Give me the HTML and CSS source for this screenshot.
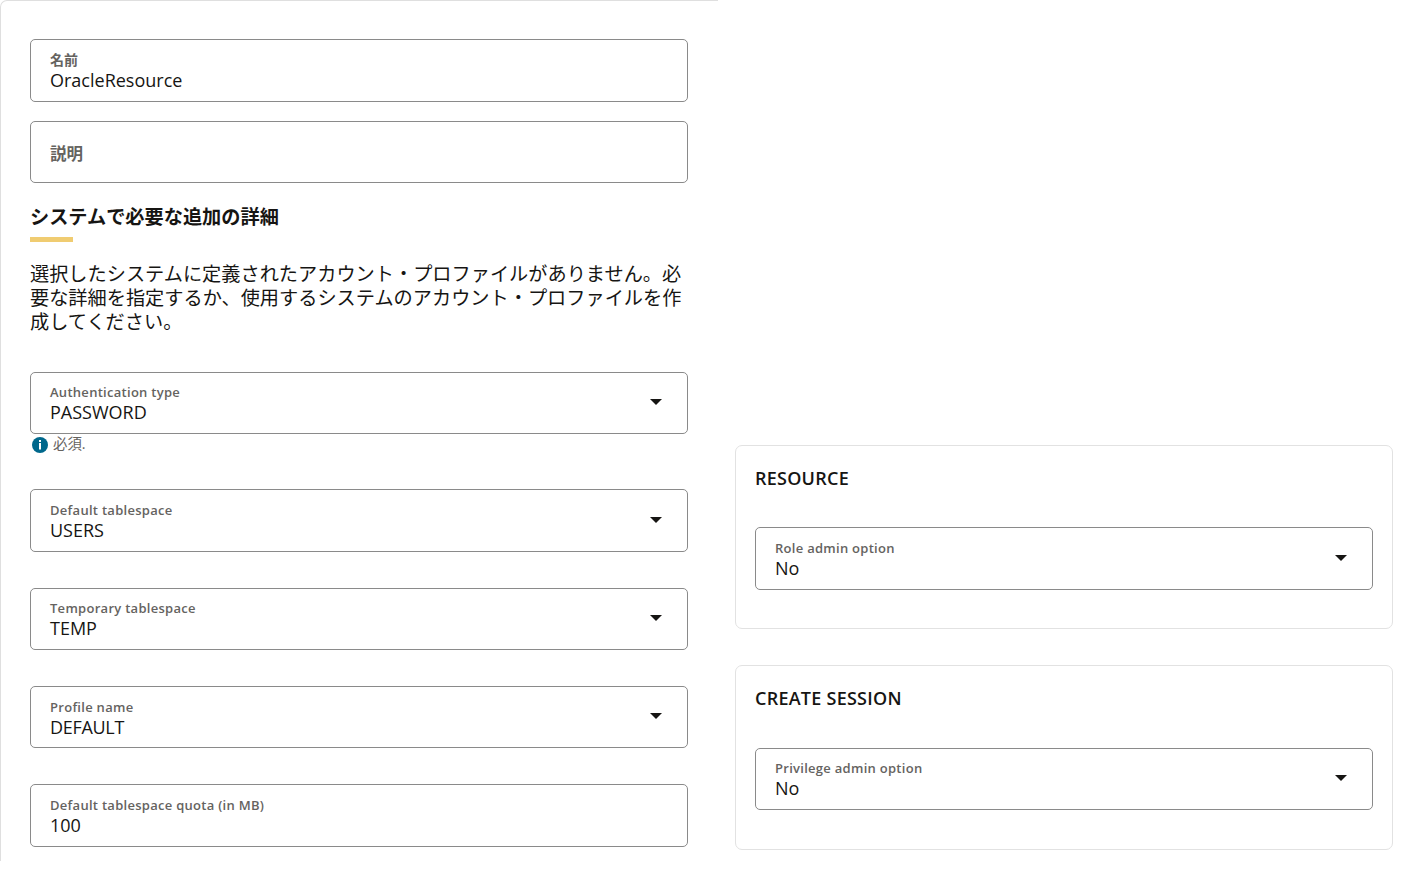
FILE: index.html
```html
<!DOCTYPE html>
<html lang="ja">
<head>
    <meta charset="UTF-8">
    <meta name="viewport" content="width=device-width, initial-scale=1.0">
    <title>OracleResource</title>

    <link rel="stylesheet" href="styles.css">
</head>
<body>

    <div class="page">
        <main class="panel">
            <div class="field">
                <div class="field-text">
                    <span class="label label-ja">名前</span>
                    <span class="value">OracleResource</span>
                </div>
            </div>

            <div class="field field-empty">
                <span class="placeholder">説明</span>
            </div>

            <h2 class="section-title">システムで必要な追加の詳細</h2>
            <p class="section-text">選択したシステムに定義されたアカウント・プロファイルがありません。必<br>要な詳細を指定するか、使用するシステムのアカウント・プロファイルを作<br>成してください。</p>

            <div class="field-list">
                <div class="field-group">
                    <div class="field">
                        <div class="field-text">
                            <span class="label">Authentication type</span>
                            <span class="value">PASSWORD</span>
                        </div>
                        <svg class="arrow" viewBox="0 0 12 6"><path d="M0 0h12L6 6z"/></svg>
                    </div>
                    <div class="hint">
                        <svg class="info" viewBox="0 0 16 16">
                            <circle cx="8" cy="8" r="8" fill="#00688c"/>
                            <path d="M7 3h2v2H7zM7 6h2v6.5H7z" fill="#fff"/>
                        </svg>
                        <span>必須.</span>
                    </div>
                </div>

                <div class="field">
                    <div class="field-text">
                        <span class="label">Default tablespace</span>
                        <span class="value">USERS</span>
                    </div>
                    <svg class="arrow" viewBox="0 0 12 6"><path d="M0 0h12L6 6z"/></svg>
                </div>

                <div class="field">
                    <div class="field-text">
                        <span class="label">Temporary tablespace</span>
                        <span class="value">TEMP</span>
                    </div>
                    <svg class="arrow" viewBox="0 0 12 6"><path d="M0 0h12L6 6z"/></svg>
                </div>

                <div class="field">
                    <div class="field-text">
                        <span class="label">Profile name</span>
                        <span class="value value-tight">DEFAULT</span>
                    </div>
                    <svg class="arrow" viewBox="0 0 12 6"><path d="M0 0h12L6 6z"/></svg>
                </div>

                <div class="field">
                    <div class="field-text">
                        <span class="label">Default tablespace quota (in MB)</span>
                        <span class="value">100</span>
                    </div>
                </div>
            </div>
        </main>

        <aside class="cards">
            <section class="card">
                <h3 class="card-title">RESOURCE</h3>
                <div class="field">
                    <div class="field-text">
                        <span class="label">Role admin option</span>
                        <span class="value">No</span>
                    </div>
                    <svg class="arrow" viewBox="0 0 12 6"><path d="M0 0h12L6 6z"/></svg>
                </div>
            </section>

            <section class="card">
                <h3 class="card-title">CREATE SESSION</h3>
                <div class="field">
                    <div class="field-text">
                        <span class="label">Privilege admin option</span>
                        <span class="value">No</span>
                    </div>
                    <svg class="arrow" viewBox="0 0 12 6"><path d="M0 0h12L6 6z"/></svg>
                </div>
            </section>
        </aside>
    </div>

</body>
</html>
```
FILE: styles.css
```css
* {
    box-sizing: border-box;
}

body {
    margin: 0;
    background-color: #fff;
    color: #161513;
    font-family: "Open Sans", "Noto Sans CJK JP", sans-serif;
}

.page {
    display: flex;
    align-items: flex-start;
    gap: 17px;
    width: 1413px;
    height: 882px;
    overflow: hidden;
}

.panel {
    width: 718px;
    height: 861px;
    padding: 38.3px 30px 0 29px;
    border-top: 1px solid #dfdfdf;
    border-left: 1px solid #dfdfdf;
    border-top-left-radius: 7px;
}

.field {
    display: flex;
    justify-content: space-between;
    height: 62.3px;
    padding: 0 25px 0 19px;
    border: 1px solid #8a8a8a;
    border-radius: 5px;
}

.field-text {
    display: flex;
    flex-direction: column;
    padding-top: 10.7px;
}

.label {
    height: 17px;
    color: #65635f;
    font-size: 13px;
    font-weight: 600;
    letter-spacing: 0.28px;
    line-height: 18px;
    white-space: nowrap;
}

.label-ja {
    font-family: "Noto Sans CJK JP", sans-serif;
    font-size: 14px;
    font-weight: 700;
    letter-spacing: 0;
    line-height: 17px;
}

.value {
    height: 24px;
    font-size: 18px;
    line-height: 24px;
    white-space: nowrap;
}

.value-tight {
    letter-spacing: -0.3px;
}

.field-empty {
    align-items: center;
    margin-top: 19.3px;
}

.placeholder {
    padding-top: 2px;
    color: #65635f;
    font-size: 16.5px;
    font-weight: 700;
}

.arrow {
    width: 12px;
    height: 6px;
    margin-top: 26.4px;
    fill: #161513;
}

.section-title {
    margin: 21.8px 0 0;
    font-size: 19.2px;
    font-weight: 700;
    line-height: 24px;
}

.section-title::after {
    content: "";
    display: block;
    width: 43px;
    height: 5px;
    margin-top: 8px;
    background-color: #f0cc71;
}

.section-text {
    margin: 19px 0 0;
    font-family: "Noto Sans CJK JP", sans-serif;
    font-size: 19.2px;
    line-height: 24px;
    white-space: nowrap;
}

.field-list {
    display: flex;
    flex-direction: column;
    gap: 36px;
    margin-top: 38.8px;
}

.field-group {
    height: 81.6px;
}

.hint {
    display: flex;
    align-items: center;
    gap: 5px;
    height: 20px;
    padding-left: 2px;
    color: #65635f;
    font-size: 14.4px;
    line-height: 20px;
}

.info {
    width: 16px;
    height: 16px;
    margin-top: 2px;
}

.cards {
    display: flex;
    flex-direction: column;
    gap: 36.1px;
    width: 658px;
    padding-top: 444.8px;
}

.card {
    height: 184.4px;
    padding: 19px 19px 0;
    border: 1px solid #e2e2e2;
    border-radius: 7px;
}

.card-title {
    height: 62.5px;
    margin: 0;
    font-size: 18px;
    font-weight: 600;
    letter-spacing: 0.25px;
    line-height: 26px;
}
```
